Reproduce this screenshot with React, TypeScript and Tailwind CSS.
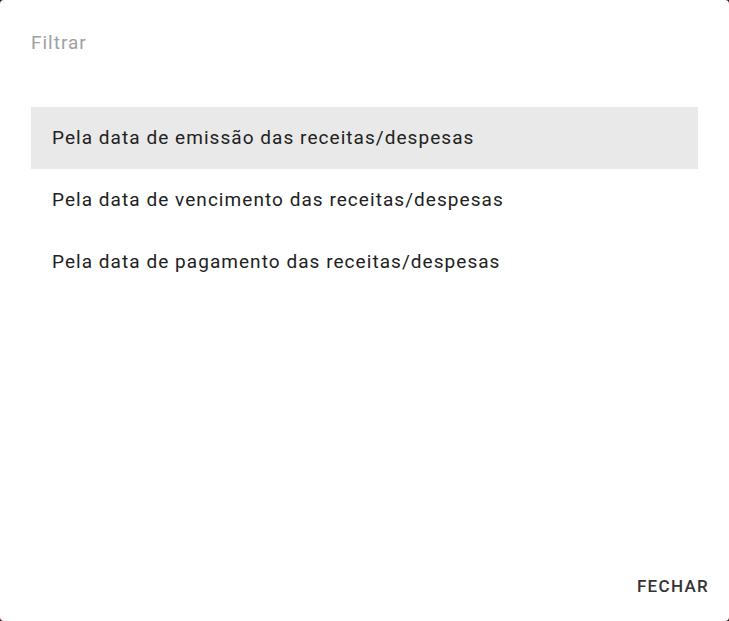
const options = [
  'Pela data de emissão das receitas/despesas',
  'Pela data de vencimento das receitas/despesas',
  'Pela data de pagamento das receitas/despesas',
];

export default function App() {
  return (
    <div className="h-[621px] w-[729px] bg-[#3b1418]">
      <div
        className="flex h-full w-full flex-col rounded-[4px] bg-white"
        style={{ fontFamily: 'Roboto, "Liberation Sans", sans-serif' }}
      >
        {/* Header */}
        <div className="px-[31px] pt-[30px] text-[19px] leading-[26px] tracking-[1px] text-[#a0a0a0]">Filtrar</div>

        {/* Options */}
        <ul className="mt-[51px] px-[31px]">
          {options.map((label, i) => (
            <li
              key={label}
              className={`flex h-[62px] items-center px-[21px] text-[19px] tracking-[1.05px] text-[#212121] ${
                i === 0 ? 'bg-[#e9e9e9]' : ''
              }`}
            >
              {label}
            </li>
          ))}
        </ul>

        {/* Footer */}
        <div className="mt-auto flex justify-end px-[20px] pb-[22px]">
          <button className="text-[17px] font-medium tracking-[1.3px] text-[#333333] uppercase">
            Fechar
          </button>
        </div>
      </div>
    </div>
  );
}
